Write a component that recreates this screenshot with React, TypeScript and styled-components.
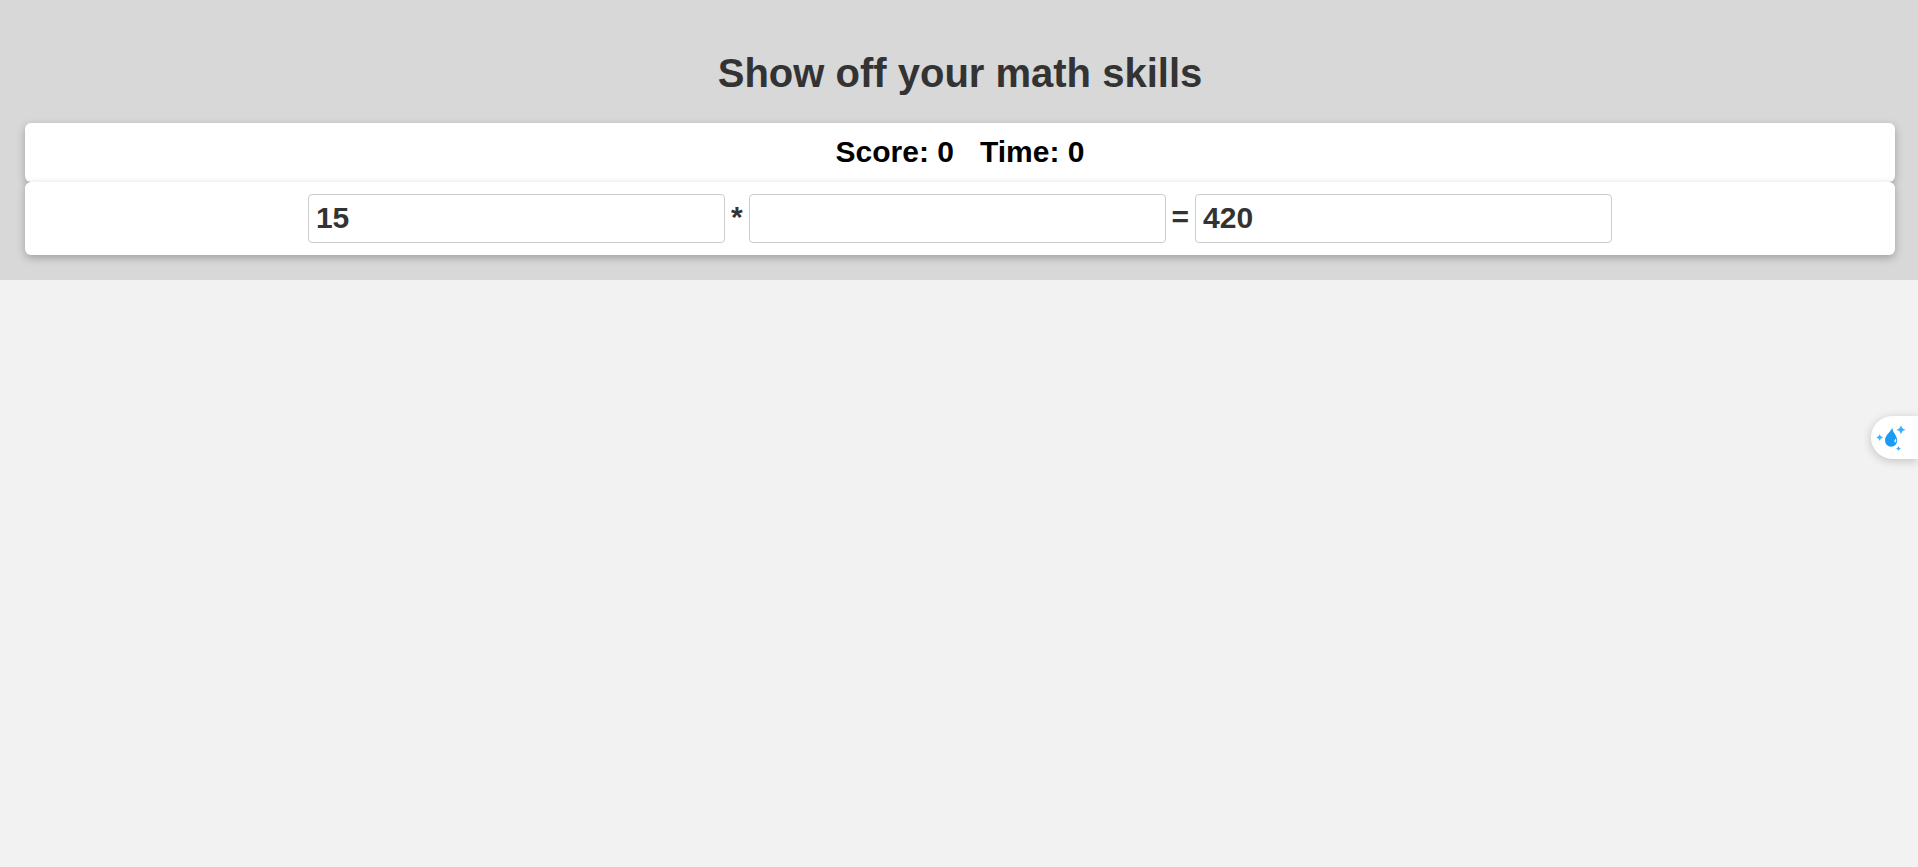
import React, { useState } from 'react';
import styled, { createGlobalStyle } from 'styled-components';

const GlobalStyle = createGlobalStyle`
  *, *::before, *::after { box-sizing: border-box; }
  body {
    margin: 0;
    background: #f2f2f2;
    color: #333;
    font-family: Arial, "Liberation Sans", sans-serif;
  }
`;

const Game = styled.main`
  padding: 50px 23px 25px 25px;
  background: #d8d8d8;
`;

const Title = styled.h1`
  margin: 0 0 27px;
  font-size: 40px;
  line-height: 46px;
  text-align: center;
`;

const Card = styled.section<{ $gap: number }>`
  display: flex;
  justify-content: center;
  gap: ${({ $gap }) => $gap}px;
  padding: 12px;
  border-radius: 6px;
  background: #fff;
  box-shadow: 0 3px 8px rgba(0, 0, 0, 0.26);
  font-size: 30px;
  font-weight: bold;
  line-height: 33px;
`;

const Stat = styled.span`
  padding-bottom: 2px;
  color: #000;
`;

const NumberField = styled.input`
  width: 417px;
  min-width: 0;
  height: 49px;
  padding: 6px 7px 8px;
  border: 1px solid #ccc;
  border-radius: 4px;
  outline: none;
  background: #fff;
  color: #333;
  font: inherit;
`;

const Sign = styled.span`
  flex: none;
  padding-top: 6px;
`;

const Assistant = styled.button`
  position: fixed;
  top: 416px;
  right: 0;
  width: 47px;
  height: 43px;
  padding: 0;
  border: 0;
  border-radius: 22px 0 0 22px;
  background: #fff;
  box-shadow: 0 2px 10px rgba(0, 0, 0, 0.2);
  cursor: pointer;

  svg { display: block; }
`;

function DropIcon() {
  return (
    <svg width="47" height="43" viewBox="0 0 47 43" aria-hidden="true">
      <path
        d="M21.300 12c.3 4.600 4.900 7.300 4.900 12.600a6.100 6.100 0 0 1-12.200 0c0-5 4.300-7.500 7.300-12.600z"
        fill="#1a9cf5"
      />
      <path d="M24.600 22.800c1.100 1.400.9 3-.6 3.900-1.100-1.200-.8-2.800.6-3.900z" fill="#e4f4ff" />
      <path d="M30 9.200c1.100 3.100 1.600 3.500 4.700 4.600-3.100 1.100-3.600 1.500-4.700 4.600-1.100-3.100-1.600-3.500-4.700-4.600 3.100-1.100 3.600-1.500 4.700-4.600z" fill="#39b0fa" />
      <path d="M8.700 18c.8 2.300 1.200 2.600 3.500 3.400-2.300.8-2.700 1.200-3.500 3.500-.8-2.300-1.200-2.700-3.500-3.500 2.300-.8 2.700-1.100 3.500-3.400z" fill="#39b0fa" />
      <path d="M27.500 29.900c.6 1.700.9 2 2.600 2.600-1.700.6-2 .9-2.600 2.600-.6-1.700-.9-2-2.600-2.600 1.700-.6 2-.9 2.600-2.600z" fill="#39b0fa" />
    </svg>
  );
}

export default function App() {
  const [answer, setAnswer] = useState('');

  return (
    <>
      <GlobalStyle />
      <Game>
        <Title>Show off your math skills</Title>
        <Card $gap={26}>
          <Stat>Score: 0</Stat>
          <Stat>Time: 0</Stat>
        </Card>
        <Card $gap={6}>
          <NumberField aria-label="First factor" value="15" readOnly />
          <Sign>*</Sign>
          <NumberField
            aria-label="Second factor"
            value={answer}
            onChange={(event) => setAnswer(event.target.value)}
          />
          <Sign>=</Sign>
          <NumberField aria-label="Product" value="420" readOnly />
        </Card>
      </Game>
      <Assistant type="button" aria-label="Open assistant">
        <DropIcon />
      </Assistant>
    </>
  );
}
